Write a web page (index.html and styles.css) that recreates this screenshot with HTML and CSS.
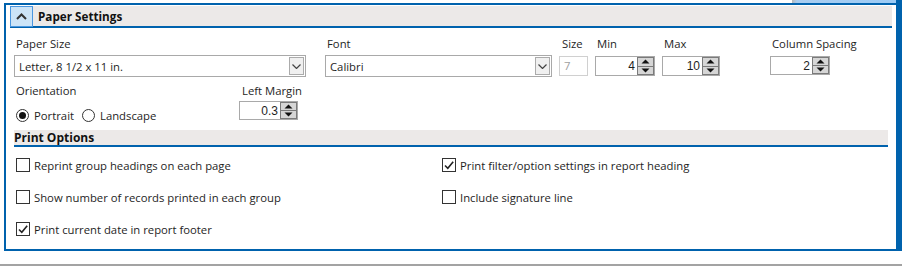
FILE: index.html
```html
<!DOCTYPE html>
<html lang="en">
<head>
    <meta charset="UTF-8"/>
    <title>Report Settings</title>
    <link rel="stylesheet" href="styles.css">
</head>
<body>
    <div class="window">
        <div class="main">
            <div class="top-strip"><div class="tab-edge"></div></div>
            <div class="frame">
                <div class="section-head">
                    <button class="toggle">
                        <svg width="11" height="7" viewBox="0 0 11 7"><polyline points="1,6 5.5,1.5 10,6" fill="none" stroke="#333" stroke-width="2"/></svg>
                    </button>
                    <span class="head-title">Paper Settings</span>
                </div>

                <div class="settings">
                    <div class="row row-top">
                        <div class="field f-paper">
                            <div class="label">Paper Size</div>
                            <div class="select">
                                <span class="select-text">Letter, 8 1/2 x 11 in.</span>
                                <span class="select-btn"><svg width="9" height="5" viewBox="0 0 9 5"><polyline points="0.5,0.5 4.5,4.5 8.5,0.5" fill="none" stroke="#444" stroke-width="1.2"/></svg></span>
                            </div>
                        </div>
                        <div class="field f-font">
                            <div class="label">Font</div>
                            <div class="select">
                                <span class="select-text">Calibri</span>
                                <span class="select-btn"><svg width="9" height="5" viewBox="0 0 9 5"><polyline points="0.5,0.5 4.5,4.5 8.5,0.5" fill="none" stroke="#444" stroke-width="1.2"/></svg></span>
                            </div>
                        </div>
                        <div class="field f-size">
                            <div class="label">Size</div>
                            <div class="box disabled">7</div>
                        </div>
                        <div class="field f-min">
                            <div class="label">Min</div>
                            <div class="spinner">
                                <span class="spin-value">4</span>
                                <span class="spin-btns">
                                    <span class="spin-btn"><svg width="9" height="5" viewBox="0 0 9 5"><path d="M0.5 4.5 L4.5 0.5 L8.5 4.5Z" fill="#111"/></svg></span>
                                    <span class="spin-btn"><svg width="9" height="5" viewBox="0 0 9 5"><path d="M0.5 0.5 L4.5 4.5 L8.5 0.5Z" fill="#111"/></svg></span>
                                </span>
                            </div>
                        </div>
                        <div class="field f-max">
                            <div class="label">Max</div>
                            <div class="spinner">
                                <span class="spin-value">10</span>
                                <span class="spin-btns">
                                    <span class="spin-btn"><svg width="9" height="5" viewBox="0 0 9 5"><path d="M0.5 4.5 L4.5 0.5 L8.5 4.5Z" fill="#111"/></svg></span>
                                    <span class="spin-btn"><svg width="9" height="5" viewBox="0 0 9 5"><path d="M0.5 0.5 L4.5 4.5 L8.5 0.5Z" fill="#111"/></svg></span>
                                </span>
                            </div>
                        </div>
                        <div class="field f-spacing">
                            <div class="label">Column Spacing</div>
                            <div class="spinner small">
                                <span class="spin-value">2</span>
                                <span class="spin-btns">
                                    <span class="spin-btn"><svg width="9" height="5" viewBox="0 0 9 5"><path d="M0.5 4.5 L4.5 0.5 L8.5 4.5Z" fill="#111"/></svg></span>
                                    <span class="spin-btn"><svg width="9" height="5" viewBox="0 0 9 5"><path d="M0.5 0.5 L4.5 4.5 L8.5 0.5Z" fill="#111"/></svg></span>
                                </span>
                            </div>
                        </div>
                    </div>

                    <div class="row row-bottom">
                        <div class="field f-orient">
                            <div class="label">Orientation</div>
                            <div class="radios">
                                <span class="radio checked"></span><span class="radio-text">Portrait</span>
                                <span class="radio"></span><span class="radio-text">Landscape</span>
                            </div>
                        </div>
                        <div class="field f-margin">
                            <div class="label">Left Margin</div>
                            <div class="spinner small">
                                <span class="spin-value">0.3</span>
                                <span class="spin-btns">
                                    <span class="spin-btn"><svg width="9" height="5" viewBox="0 0 9 5"><path d="M0.5 4.5 L4.5 0.5 L8.5 4.5Z" fill="#111"/></svg></span>
                                    <span class="spin-btn"><svg width="9" height="5" viewBox="0 0 9 5"><path d="M0.5 0.5 L4.5 4.5 L8.5 0.5Z" fill="#111"/></svg></span>
                                </span>
                            </div>
                        </div>
                    </div>

                    <div class="sub-head">Print Options</div>

                    <div class="options">
                        <div class="option"><span class="check"></span>Reprint group headings on each page</div>
                        <div class="option"><span class="check checked"><svg width="12" height="12" viewBox="0 0 12 12"><polyline points="2,6.5 4.8,9.3 10.2,2.8" fill="none" stroke="#222" stroke-width="1.6"/></svg></span>Print filter/option settings in report heading</div>
                        <div class="option"><span class="check"></span>Show number of records printed in each group</div>
                        <div class="option"><span class="check"></span>Include signature line</div>
                        <div class="option"><span class="check checked"><svg width="12" height="12" viewBox="0 0 12 12"><polyline points="2,6.5 4.8,9.3 10.2,2.8" fill="none" stroke="#222" stroke-width="1.6"/></svg></span>Print current date in report footer</div>
                    </div>
                </div>
            </div>
        </div>
        <div class="scroll-edge"></div>
    </div>
    <div class="bottom-line"></div>
</body>
</html>
```

FILE: styles.css
```css
body {
    margin: 0;
    width: 902px;
    height: 266px;
    overflow: hidden;
    background: #ffffff;
    color: #1e1e1e;
    font-family: "Open Sans", Arial, sans-serif;
    font-size: 11.3px;
}
.window {
    display: flex;
    height: 251px;
}
.main {
    flex: 1;
    display: flex;
    flex-direction: column;
}
.top-strip {
    height: 3px;
    display: flex;
    justify-content: flex-end;
}
.tab-edge {
    width: 104px;
    background: linear-gradient(to right, #b8b8b8 0, #a9cdf0 5px, #9ccbf5 100%);
}
.frame {
    flex: 1;
    margin-left: 4px;
    border-left: 2px solid #0062ad;
    border-top: 2px solid #0062ad;
    border-bottom: 2px solid #0062ad;
    display: flex;
    flex-direction: column;
}
.scroll-edge {
    width: 6px;
    background: #0062ad;
}
.bottom-line {
    margin-top: 13px;
    height: 2px;
    background: #a3a3a3;
}
.section-head {
    margin: 1px 4px 0 4px;
    height: 20px;
    background: #ece9e8;
    border-bottom: 2px solid #0062ad;
    display: flex;
    align-items: flex-start;
}
.toggle {
    width: 23px;
    height: 21px;
    margin: 0;
    padding: 0;
    border: 1px solid #4a96df;
    background: #cce4f7;
    display: flex;
    align-items: center;
    justify-content: center;
}
.head-title {
    margin-left: 5px;
    line-height: 21px;
    font-size: 11.7px;
    font-weight: bold;
    color: #111;
}
.settings {
    padding: 8px 8px 0 8px;
    flex: 1;
    display: flex;
    flex-direction: column;
}
.row {
    display: flex;
    align-items: flex-start;
}
.label {
    line-height: 16px;
    padding-left: 2px;
    white-space: nowrap;
}
.field {
    display: flex;
    flex-direction: column;
}
.f-paper { width: 292px; }
.f-font { width: 227px; margin-left: 19px; }
.f-size { width: 29px; margin-left: 7px; }
.f-min { width: 60px; margin-left: 7px; }
.f-max { width: 58px; margin-left: 7px; }
.f-spacing { width: 60px; margin-left: 50px; }
.f-size .label { padding-left: 3px; }
.select {
    margin-top: 3px;
    height: 22px;
    box-sizing: border-box;
    border: 1px solid #a9a9a9;
    display: flex;
    align-items: center;
}
.select-text {
    flex: 1;
    padding-left: 4px;
}
.select-btn {
    width: 15px;
    height: 18px;
    box-sizing: border-box;
    margin-right: 1px;
    border: 1px solid #ababab;
    background: #f0f0f0;
    display: flex;
    align-items: center;
    justify-content: center;
}
.box {
    margin-top: 4px;
    height: 20px;
    box-sizing: border-box;
    border: 1px solid #a9a9a9;
    padding-left: 4px;
    line-height: 18px;
}
.box.disabled {
    border-color: #d0d0d0;
    color: #a0a0a0;
}
.spinner {
    margin-top: 4px;
    height: 20px;
    box-sizing: border-box;
    border: 1px solid #a9a9a9;
    display: flex;
}
.spinner.small {
    height: 19px;
}
.spin-value {
    flex: 1;
    text-align: right;
    padding-right: 2px;
    line-height: 18px;
    font-size: 12px;
    font-family: "Liberation Sans Narrow", "Liberation Sans", Arial, sans-serif;
}
.spin-btns {
    width: 17px;
    display: flex;
    flex-direction: column;
}
.spin-btn {
    flex: 1;
    background: #d6d6d6;
    border: 1px solid #7a7a7a;
    display: flex;
    align-items: center;
    justify-content: center;
}
.spin-btn + .spin-btn {
    border-top: none;
}
.row-bottom {
    margin-top: 6px;
}
.f-orient { width: 225px; }
.radios {
    margin-top: 8px;
    display: flex;
    align-items: center;
    height: 16px;
    padding-left: 2px;
}
.radio {
    width: 13px;
    height: 13px;
    box-sizing: border-box;
    border: 1px solid #333;
    border-radius: 50%;
    display: flex;
    align-items: center;
    justify-content: center;
}
.radio.checked::after {
    content: "";
    width: 7px;
    height: 7px;
    border-radius: 50%;
    background: #111;
}
.radio-text {
    margin-left: 5px;
    margin-right: 8px;
}
.f-margin { width: 59px; }
.f-margin .label { padding-left: 3px; }
.f-margin .spinner { margin-top: 2px; }
.sub-head {
    margin-top: 7px;
    height: 15px;
    line-height: 15px;
    background: #ece9e8;
    border-bottom: 2px solid #0062ad;
    font-weight: bold;
    font-size: 12px;
    color: #111;
}
.options {
    margin-top: 2px;
    display: grid;
    grid-template-columns: 426px 1fr;
    grid-auto-rows: 32px;
    padding-left: 2px;
}
.option {
    display: flex;
    align-items: center;
    white-space: nowrap;
}
.check {
    width: 14px;
    height: 14px;
    box-sizing: border-box;
    border: 1px solid #333;
    margin-right: 4px;
    display: flex;
    align-items: center;
    justify-content: center;
}
```
